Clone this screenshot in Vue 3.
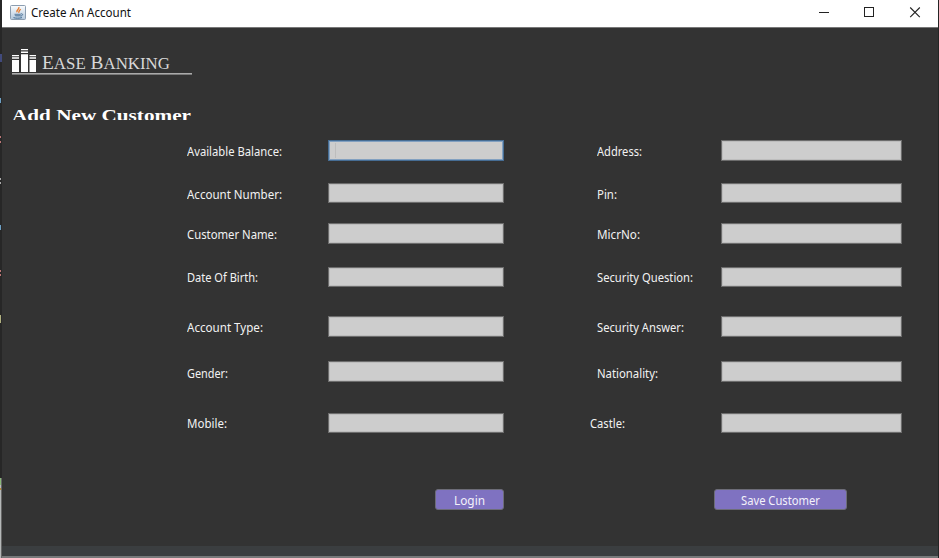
<script setup>
const rows = [
  { left: 'Available Balance:', right: 'Address:', lw: 95, rw: 45, tall: true, focused: true },
  { left: 'Account Number:', right: 'Pin:', lw: 95, rw: 20 },
  { left: 'Customer Name:', right: 'MicrNo:', lw: 90, rw: 43, tall: true },
  { left: 'Date Of Birth:', right: 'Security Question:', lw: 71, rw: 96, raised: true },
  { left: 'Account Type:', right: 'Security Answer:', lw: 76, rw: 87, tall: true },
  { left: 'Gender:', right: 'Nationality:', lw: 41, rw: 61, tall: true, lowered: true },
  { left: 'Mobile:', right: 'Castle:', lw: 40, rw: 35, outdent: true, raised: true },
]
</script>

<template>
  <div class="desktop">
    <svg class="edge" width="2" height="558" viewBox="0 0 2 558" shape-rendering="crispEdges">
      <rect width="2" height="478" fill="#272727" />
      <rect y="54" width="2" height="8" fill="#414a7c" />
      <path d="M0 98h1v5H0z" fill="#6c9fc4" />
      <path d="M0 136h1v2H0zM0 141h1v2H0z" fill="#bd7777" />
      <path d="M0 178h1v2H0zM0 182h1v2H0z" fill="#aaa" />
      <path d="M0 225h1v5H0z" fill="#6c9fc4" />
      <path d="M0 270h1v2H0zM0 274h1v2H0z" fill="#bd7777" />
      <path d="M0 315h1v8H0z" fill="#b0b080" />
      <rect y="478" width="1" height="7" fill="#89b978" />
      <rect y="485" width="1" height="3" fill="#bbb" />
      <rect y="488" width="1" height="2" fill="#bd8b31" />
      <rect y="490" width="1" height="68" fill="#b5b8b8" />
      <rect x="1" y="478" width="1" height="80" fill="#666" />
    </svg>
    <main class="window">
      <header class="titlebar">
        <svg class="java" width="16" height="16" viewBox="0 0 16 16">
          <defs>
            <linearGradient id="tile" x2="0" y2="1">
              <stop stop-color="#fcfdfe" />
              <stop offset="1" stop-color="#b2c7dc" />
            </linearGradient>
          </defs>
          <rect x=".5" y=".5" width="15" height="14" rx="1" fill="url(#tile)" stroke="#8b9db0" />
          <path d="M8.800 2C10 4.300 5.800 4.600 7 7.300M10.800 4.300C8.200 5.200 9.800 6.300 8.500 7.800" fill="none" stroke="#e87928" stroke-width="1.300" />
          <path d="M4.500 8.800h6.300c0 2-.6 2.700-1.500 2.700H6c-.9 0-1.500-.7-1.500-2.700z" fill="#6f8fae" />
          <path d="M3.500 12.600c2 .8 6 .8 8.500 0M10.800 8.800c2.800-.3 2.200 2.100-.5 2.300" fill="none" stroke="#466f94" />
        </svg>
        <svg class="caption" width="110" height="20">
          <text x="0" y="13" textLength="100" lengthAdjust="spacingAndGlyphs">Create An Account</text>
        </svg>
        <svg class="controls" width="120" height="26" viewBox="0 0 120 26" fill="none" stroke="#222">
          <path d="M9 12.500h10" />
          <rect x="54.500" y="7.500" width="9" height="9" />
          <path d="M100.200 7.500l9.600 9.600M109.800 7.500l-9.600 9.600" stroke-width="1.100" />
        </svg>
      </header>

      <section class="content">
        <svg class="brand" width="182" height="30" viewBox="0 0 182 30">
          <g fill="#fff">
            <path d="M0 7h7v1.200H0zM0 9.200h7v1.600H0zM0 12h7v12H0z" />
            <path d="M9 1h7v1.200H9zM9 3.500h7v1.500H9zM9 6.300h7V24H9z" />
            <path d="M17.500 7h6.500v1.200h-6.500zM17.500 9.200h6.500v1.600h-6.500zM17.500 12h6.500v12h-6.500z" />
          </g>
          <text x="30" y="21" textLength="128" lengthAdjust="spacingAndGlyphs">E<tspan class="minor">ase</tspan> B<tspan class="minor">anking</tspan></text>
          <rect y="25" width="180" height="1.600" fill="#aaa" />
        </svg>

        <svg class="heading" width="185" height="16">
          <text x="0" y="16.500" textLength="179" lengthAdjust="spacingAndGlyphs">Add New Customer</text>
        </svg>

        <form class="form" @submit.prevent>
          <template v-for="row in rows" :key="row.left">
            <label class="label" :class="{ raised: row.raised, lowered: row.lowered }">
              <svg width="110" height="20"><text x="0" y="15" :textLength="row.lw" lengthAdjust="spacingAndGlyphs">{{ row.left }}</text></svg>
            </label>
            <div class="field" :class="{ focused: row.focused, tall: row.tall }"><i v-if="row.focused" class="caret"></i></div>
            <label class="label right" :class="{ outdent: row.outdent, raised: row.raised, lowered: row.lowered }">
              <svg width="110" height="20"><text x="0" y="15" :textLength="row.rw" lengthAdjust="spacingAndGlyphs">{{ row.right }}</text></svg>
            </label>
            <div class="field" :class="{ tall: row.tall }"></div>
          </template>
        </form>

        <div class="actions">
          <button class="login"><svg width="40" height="20"><text x="4" y="14.500" textLength="31" lengthAdjust="spacingAndGlyphs">Login</text></svg></button>
          <button class="save"><svg width="110" height="20"><text x="15" y="14.500" textLength="79" lengthAdjust="spacingAndGlyphs">Save Customer</text></svg></button>
        </div>
      </section>
      <footer class="bottom"></footer>
    </main>
  </div>
</template>

<style>
body { margin: 0; overflow: hidden; background: #333; }
</style>

<style scoped>
.desktop { display: flex; width: 939px; height: 558px; font-family: "Noto Sans", "Open Sans", sans-serif; }
svg { display: block; flex: none; }
.window { display: flex; flex-direction: column; box-sizing: border-box; width: 937px; height: 558px; background: #333; border-right: 1px solid #252525; }
.titlebar { display: flex; flex: none; box-sizing: border-box; height: 28px; background: #fff; border-bottom: 1px solid #777; }
.java { margin: 5px 0 0 8px; }
.caption { margin: 4px 0 0 5px; overflow: visible; font-size: 12px; fill: #111; }
.controls { margin-left: auto; margin-right: 8px; }
.content { flex: 1; display: flex; flex-direction: column; }
.brand { margin: 20px 0 0 10px; }
.brand text { font: 19.500px "Liberation Serif", serif; text-transform: uppercase; fill: #d8d8d8; }
.minor { font-size: 17px; }
.heading { margin: 26px 0 0 10px; overflow: hidden; }
.heading text { font: bold 17px "Liberation Serif", serif; fill: #fff; }
.form { display: grid; grid-template-columns: 141px 176px 93px 124px 181px; grid-template-rows: 43px 40px 44px 49px 45px 52px 20px; margin: 20px 0 0 185px; align-items: start; }
.label { grid-column: 1; padding-top: 1px; font-size: 12.500px; fill: #f2f2f2; }
.label.right { grid-column: 4; }
.label.raised { padding-top: 0; }
.label.lowered { padding-top: 2px; }
.label.outdent { margin-left: -7px; }
.field { box-sizing: border-box; height: 20px; background: #cdcdcd; border: 1px solid #6c6c6c; box-shadow: inset 0 0 0 1px #bdbdbd; }
.label + .field { grid-column: 2; }
.label.right + .field { grid-column: 5; }
.field.tall { height: 21px; }
.field.focused { border-color: #466d94; box-shadow: inset 0 0 0 1px #82a0c0; }
.caret { display: block; width: 1px; height: 15px; margin: 2px 0 0 6px; background: #bdbdbd; }
.actions { display: flex; gap: 210px; margin: 56px 0 0 433px; }
button { display: flex; justify-content: center; box-sizing: border-box; height: 21px; padding: 0; border: 1px solid #6d6d78; border-radius: 3px; background: #7f72c1; font: 12.500px "Noto Sans", sans-serif; fill: #f3f1fa; }
.login { width: 69px; }
.save { width: 133px; }
.bottom { flex: none; height: 10px; background: #3b3e40; border-bottom: 2px solid #77797a; }
</style>
